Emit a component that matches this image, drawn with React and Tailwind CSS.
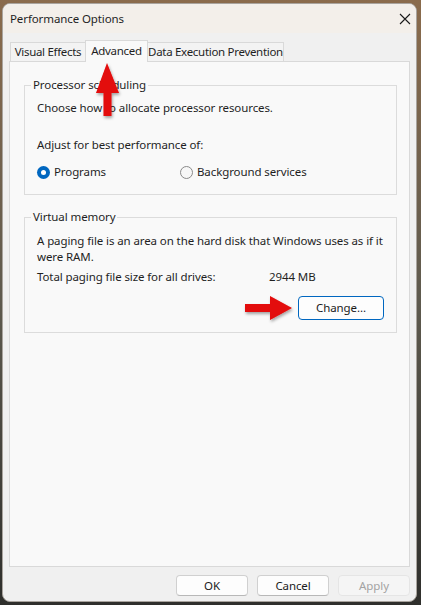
import React from "react";

const Radio = ({ checked }) =>
  checked ? (
    <span className="w-[13px] h-[13px] rounded-full bg-[#0067c0] flex items-center justify-center shrink-0">
      <span className="w-[5px] h-[5px] rounded-full bg-white" />
    </span>
  ) : (
    <span className="w-[13px] h-[13px] rounded-full border border-[#8a8a8a] bg-[#f7f7f7] shrink-0" />
  );

const Tab = ({ label, active, className }) => (
  <div
    className={
      active
        ? "relative z-10 -mb-px h-[22px] flex items-start justify-center pt-[2px] whitespace-nowrap tracking-[-0.3px] border border-b-0 border-[#d9d9d9] bg-[#f9f9f9] " + className
        : "h-[19px] flex items-center justify-center whitespace-nowrap tracking-[-0.3px] border border-b-0 border-[#d9d9d9] bg-[#f3f3f3] " + className
    }
  >
    {label}
  </div>
);

const Button = ({ children, disabled }) => (
  <button
    className={
      disabled
        ? "w-[72px] h-[21px] rounded-[4px] border border-[#e5e5e5] bg-[#f5f5f5] text-[#a3a3a3]"
        : "w-[72px] h-[21px] rounded-[4px] border border-[#d0d0d0] border-b-[#b8b8b8] bg-[#fdfdfd] text-[#1b1b1b]"
    }
  >
    {children}
  </button>
);

export default function App() {
  return (
    <div className="relative w-[421px] h-[605px] overflow-hidden bg-linear-to-b from-[#8a6b4c] via-[#5e5a4e] to-[#2f2f2c] pt-[3px] pl-[2px] font-['Noto_Sans',sans-serif] text-[11.5px] tracking-[-0.1px] leading-[16px] text-[#1f1f1f]">
      <div className="w-[415px] h-[599px] rounded-[8px] overflow-hidden border border-[#a9a49e] bg-[#f0f0f0] flex flex-col">
        {/* title bar */}
        <div className="h-[29px] shrink-0 bg-[#f3efea] flex items-center justify-between pl-[7px] pr-[5px]">
          <span className="pt-[1px]">Performance Options</span>
          <svg width="12" height="12" viewBox="0 0 12 12">
            <path d="M1 1 L11 11 M11 1 L1 11" stroke="#1a1a1a" strokeWidth="1.1" fill="none" />
          </svg>
        </div>

        <div className="flex-1 flex flex-col px-[6px] pt-[7px]">
          {/* tabs */}
          <div className="flex items-end ml-[1px]">
            <Tab label="Visual Effects" className="w-[76px]" />
            <Tab label="Advanced" active className="-ml-px w-[63px]" />
            <Tab label="Data Execution Prevention" className="-ml-px w-[137px]" />
          </div>

          {/* panel */}
          <div className="h-[506px] border border-[#d9d9d9] bg-[#f9f9f9] pt-[15px] pl-[14px] pr-[12px]">
            <fieldset className="min-w-0 border border-[#dcdcdc] pl-[12px] pr-[12px] pb-[14px]">
              <legend className="-ml-[6px] px-[2px]">Processor scheduling</legend>
              <div className="pt-[7px]">Choose how to allocate processor resources.</div>
              <div className="mt-[21px]">Adjust for best performance of:</div>
              <div className="mt-[11px] flex items-center h-[16px]">
                <Radio checked />
                <span className="ml-[4px] w-[126px]">Programs</span>
                <Radio />
                <span className="ml-[4px]">Background services</span>
              </div>
            </fieldset>

            <fieldset className="min-w-0 mt-[14px] border border-[#dcdcdc] pl-[12px] pr-[12px] pb-[12px]">
              <legend className="-ml-[6px] px-[2px]">Virtual memory</legend>
              <div className="pt-[8px] whitespace-nowrap">
                A paging file is an area on the hard disk that Windows uses as if it
                <br />
                were RAM.
              </div>
              <div className="mt-[4px] flex">
                <span className="w-[232px]">Total paging file size for all drives:</span>
                <span>2944 MB</span>
              </div>
              <div className="mt-[11px] flex">
                <button className="ml-[261px] w-[86px] h-[24px] rounded-[4px] border border-[#0067c0] bg-[#fdfdfd] text-[#1b1b1b]">
                  Change...
                </button>
              </div>
            </fieldset>
          </div>

          {/* bottom buttons */}
          <div className="mt-[8px] flex justify-end gap-[9px]">
            <Button>OK</Button>
            <Button>Cancel</Button>
            <Button disabled>Apply</Button>
          </div>
        </div>
      </div>

      {/* red annotation arrows */}
      <svg className="absolute left-0 top-0 pointer-events-none" width="421" height="605">
        <defs>
          <filter id="sh" x="-50%" y="-50%" width="200%" height="200%">
            <feDropShadow dx="1" dy="2" stdDeviation="1.5" floodColor="#000" floodOpacity="0.35" />
          </filter>
        </defs>
        <g filter="url(#sh)" fill="#e30808">
          <path d="M107 63 L96 93 L103.5 93 L103.5 116 L111.5 116 L111.5 93 L119 93 Z" />
          <path d="M292 308 L270 296 L270 304 L245 304 L245 312 L270 312 L270 320 Z" />
        </g>
      </svg>
    </div>
  );
}
